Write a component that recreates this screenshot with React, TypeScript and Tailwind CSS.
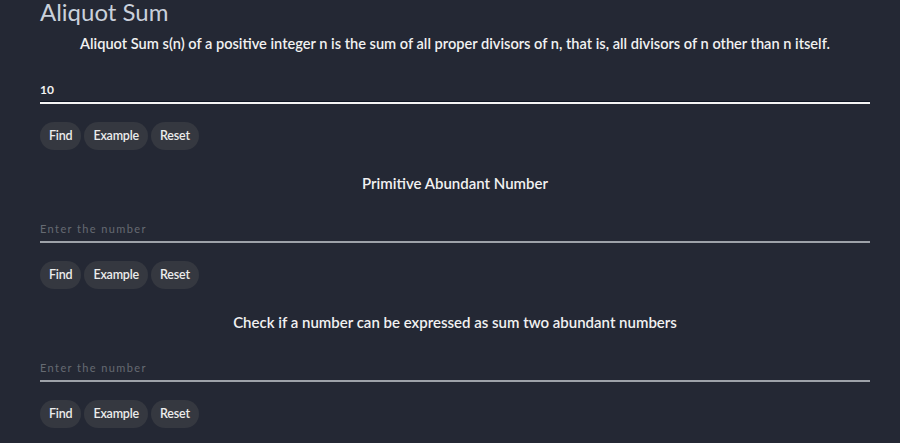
import React from "react";

const font = { fontFamily: "Lato, 'Noto Sans', sans-serif" };

function Buttons() {
  return (
    <div className="mt-[18px] flex gap-[3px]">
      {["Find", "Example", "Reset"].map((b) => (
        <button
          key={b}
          className="h-[28px] rounded-full bg-[#353840] px-[9px] text-[12.5px] font-semibold tracking-[-0.2px] text-[#ececec]"
        >
          {b}
        </button>
      ))}
    </div>
  );
}

function Field({ value, focused }: { value?: string; focused?: boolean }) {
  return (
    <input
      readOnly
      value={value}
      placeholder="Enter the number"
      className={
        "block h-[48px] w-full bg-transparent pt-[25px] pb-[5px] text-[12px] leading-[16px] outline-none placeholder:text-[#666a72] placeholder:tracking-[1.4px] placeholder:text-[11px] " +
        (focused
          ? "border-b-2 border-[#f4f4f4] font-bold text-[#f2f2f2] shadow-[0_-1px_0_#0e1422_inset]"
          : "border-b-2 border-[#9ea2a9] text-[#f2f2f2]")
      }
    />
  );
}

export default function App() {
  return (
    <div className="min-h-[443px] w-full bg-[#242834]" style={font}>
      <div className="ml-[40px] mr-[30px] pb-[13px]">
        <h1 className="h-[24px] text-[24px] leading-[24px] text-[#c9d0db]">Aliquot Sum</h1>
        <p className="mt-[8px] flex h-[24px] items-center justify-center text-[14.6px] font-semibold text-[#f1f1f1]">
          Aliquot Sum s(n) of a positive integer n is the sum of all proper divisors of n, that is, all divisors of n other than n itself.
        </p>
        <Field value="10" focused />
        <Buttons />

        <h2 className="mt-[21px] flex h-[24px] items-center justify-center text-[15px] font-semibold text-[#f1f1f1]">
          Primitive Abundant Number
        </h2>
        <Field />
        <Buttons />

        <h2 className="mt-[21px] flex h-[24px] items-center justify-center text-[15px] font-semibold text-[#f1f1f1]">
          Check if a number can be expressed as sum two abundant numbers
        </h2>
        <Field />
        <Buttons />
      </div>
    </div>
  );
}
